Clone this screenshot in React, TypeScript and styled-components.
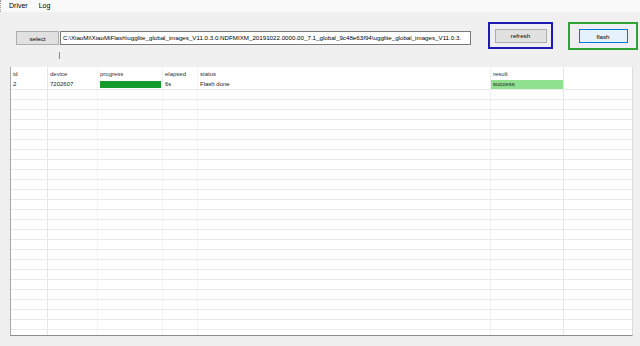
import styled, { createGlobalStyle } from "styled-components";

const GlobalStyle = createGlobalStyle`
  html, body {
    margin: 0;
    padding: 0;
    background: #f0f0f0;
    font-family: "Liberation Sans", Arial, sans-serif;
  }
`;

// Window body
const Window = styled.div`
  width: 640px;
  height: 346px;
  overflow: hidden;
  background: #f0f0f0;
  color: #000;
`;

const MenuBar = styled.div`
  height: 12px;
  display: flex;
  align-items: center;
  gap: 11px;
  padding-left: 8px;
  background: #f9f9f9;
  border-left: 1px dotted #9a9a9a;
  box-sizing: border-box;
  font-size: 7px;
`;

const MenuItem = styled.span`
  line-height: 12px;
`;

const Toolbar = styled.div`
  height: 55px;
  display: flex;
  align-items: flex-start;
  padding-left: 16px;
  box-sizing: border-box;
`;

const Button = styled.button<{ $focused?: boolean }>`
  box-sizing: border-box;
  height: 14px;
  padding: 0;
  font-family: inherit;
  font-size: 6.2px;
  color: #000;
  background: ${(p) => (p.$focused ? "#e5f1fb" : "#e1e1e1")};
  border: 1px solid ${(p) => (p.$focused ? "#0078d7" : "#adadad")};
  border-radius: 0;
`;

const SelectButton = styled(Button)`
  width: 43px;
  margin-top: 19px;
`;

const PathColumn = styled.div`
  display: flex;
  flex-direction: column;
  margin-top: 19px;
  margin-left: 1px;
`;

const PathField = styled.div`
  box-sizing: border-box;
  width: 411px;
  height: 14px;
  padding: 0 2px;
  background: #fff;
  border: 1px solid #7a7a7a;
  font-size: 6.2px;
  line-height: 12px;
  white-space: nowrap;
  overflow: hidden;
`;

const Tick = styled.div`
  width: 1px;
  height: 7px;
  margin-top: 7px;
  margin-left: -1px;
  background: #8a8a8a;
`;

const FrameBox = styled.div<{ $color: string; $ml: number; $w: number; $h: number }>`
  box-sizing: border-box;
  display: flex;
  align-items: center;
  justify-content: center;
  margin-top: 10px;
  margin-left: ${(p) => p.$ml}px;
  width: ${(p) => p.$w}px;
  height: ${(p) => p.$h}px;
  border: 2px solid ${(p) => p.$color};
  background: #eeeef4;
`;

const RefreshButton = styled(Button)`
  width: 52px;
`;

const FlashButton = styled(Button)`
  width: 49px;
`;

// Data grid
const Grid = styled.div`
  box-sizing: border-box;
  margin-left: 10px;
  width: 623px;
  height: 269px;
  background: #fff;
  border-left: 1px solid #a8a8a8;
  border-right: 1px solid #dcdcdc;
  border-bottom: 1px solid #8c8c8c;
  overflow: hidden;
  font-size: 6px;
  color: #222;
`;

const columns = "37px 50px 65px 35px 293px 73px 1fr";

const HeaderRow = styled.div`
  display: grid;
  grid-template-columns: ${columns};
  height: 13px;
`;

const Row = styled.div`
  display: grid;
  grid-template-columns: ${columns};
  height: 10px;
  border-bottom: 1px solid #e9e9e9;
  box-sizing: border-box;
`;

const Cell = styled.div<{ $line?: string }>`
  box-sizing: border-box;
  padding-left: 2px;
  border-right: 1px solid ${(p) => p.$line ?? "#f2f2f2"};
  white-space: nowrap;
  overflow: hidden;
`;

const HeaderCell = styled(Cell)`
  line-height: 14px;
  color: #333;
`;

const DataCell = styled(Cell)`
  line-height: 9px;
`;

const ProgressCell = styled(Cell)`
  padding: 1px 1px 1px 2px;
`;

const ProgressBar = styled.div`
  height: 100%;
  background: #169c2c;
`;

const ResultCell = styled(DataCell)<{ $ok?: boolean }>`
  background: ${(p) => (p.$ok ? "#8fe08f" : "transparent")};
`;

const headers = ["id", "device", "progress", "elapsed", "status", "result", ""];
const lines = ["#e6e6e6", "#f4f4f4", "#f4f4f4", "#f4f4f4", "#f0f0f0", "#e6e6e6", "transparent"];

const path =
  "C:\\XiaoMi\\XiaoMiFlash\\ugglite_global_images_V11.0.3.0.NDFMIXM_20191022.0000.00_7.1_global_9c48e63f94\\ugglite_global_images_V11.0.3.";

export default function App() {
  const emptyRows = Array.from({ length: 25 });
  return (
    <Window>
      <GlobalStyle />
      <MenuBar>
        <MenuItem>Driver</MenuItem>
        <MenuItem>Log</MenuItem>
      </MenuBar>
      <Toolbar>
        <SelectButton>select</SelectButton>
        <PathColumn>
          <PathField>{path}</PathField>
          <Tick />
        </PathColumn>
        <FrameBox $color="#1c1cb4" $ml={17} $w={65} $h={27}>
          <RefreshButton>refresh</RefreshButton>
        </FrameBox>
        <FrameBox $color="#2fa334" $ml={15} $w={70} $h={28}>
          <FlashButton $focused>flash</FlashButton>
        </FrameBox>
      </Toolbar>
      <Grid>
        <HeaderRow>
          {headers.map((h, i) => (
            <HeaderCell key={i} $line={lines[i]}>
              {h}
            </HeaderCell>
          ))}
        </HeaderRow>
        <Row>
          <DataCell $line={lines[0]}>2</DataCell>
          <DataCell $line={lines[1]}>7202607</DataCell>
          <ProgressCell $line={lines[2]}>
            <ProgressBar />
          </ProgressCell>
          <DataCell $line={lines[3]}>6s</DataCell>
          <DataCell $line={lines[4]}>Flash done</DataCell>
          <ResultCell $line={lines[5]} $ok>
            success
          </ResultCell>
          <DataCell $line={lines[6]} />
        </Row>
        {emptyRows.map((_, r) => (
          <Row key={r}>
            {lines.map((l, i) => (
              <DataCell key={i} $line={l} />
            ))}
          </Row>
        ))}
      </Grid>
    </Window>
  );
}
